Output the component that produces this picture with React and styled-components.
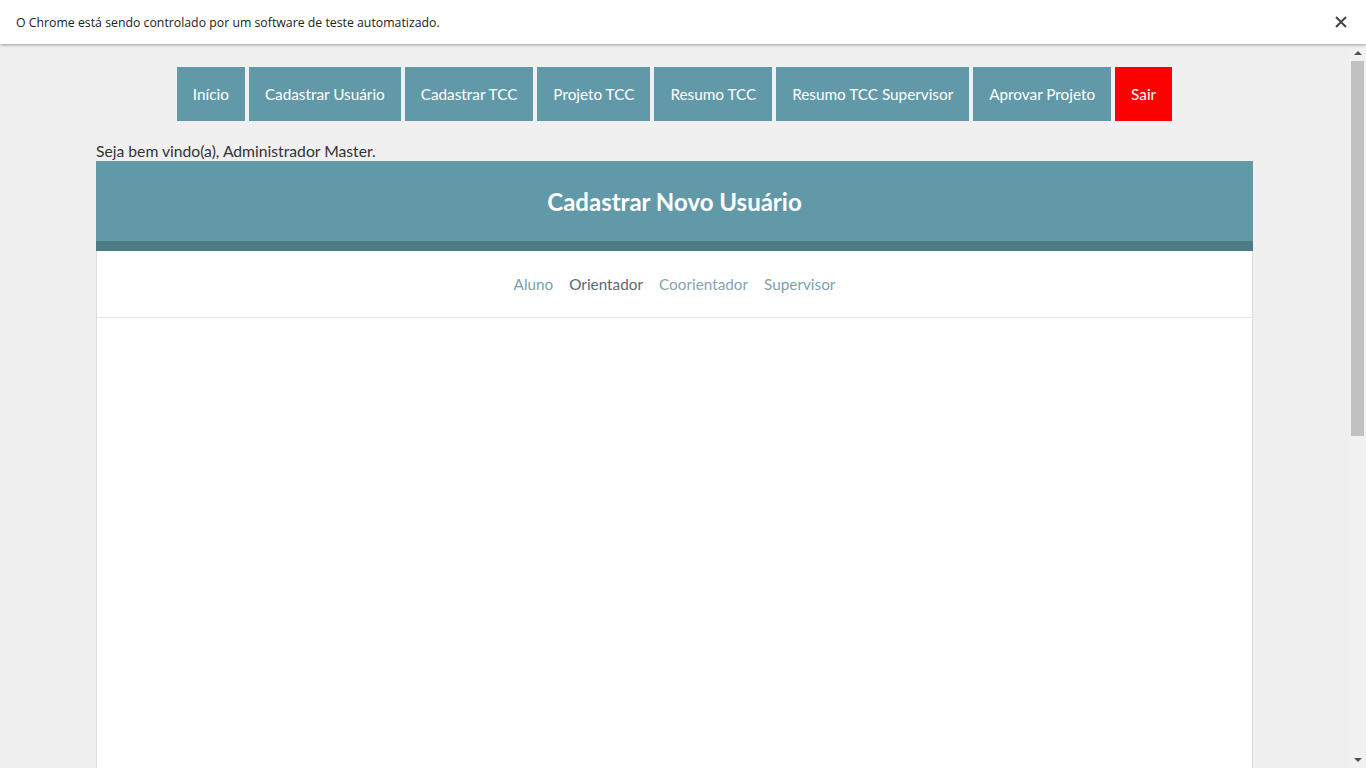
import React from "react";
import styled, { createGlobalStyle } from "styled-components";

const GlobalStyle = createGlobalStyle`
  html, body {
    margin: 0;
    padding: 0;
    height: 100%;
    overflow: hidden;
    background-color: #f0f0f0;
  }
  * {
    box-sizing: border-box;
  }
`;

const Screen = styled.div`
  height: 100vh;
  display: flex;
  flex-direction: column;
`;

const InfoBar = styled.div`
  position: relative;
  z-index: 2;
  height: 44px;
  flex-shrink: 0;
  background-color: #ffffff;
  box-shadow: 0 1px 3px rgba(0, 0, 0, 0.35);
  display: flex;
  align-items: center;
  justify-content: space-between;
  padding: 0 18px 0 16px;
  font-family: "Open Sans", "Noto Sans", sans-serif;
  font-size: 12.3px;
  color: #222;
`;

const CloseButton = styled.button`
  border: none;
  background: none;
  padding: 0;
  width: 14px;
  height: 14px;
  display: flex;
  cursor: pointer;
`;

const Viewport = styled.div`
  flex: 1;
  display: flex;
  min-height: 0;
`;

const Page = styled.div`
  flex: 1;
  overflow: hidden;
  display: flex;
  flex-direction: column;
  font-family: "Lato", "Open Sans", sans-serif;
`;

const Scrollbar = styled.div`
  width: 17px;
  flex-shrink: 0;
  background-color: #f1f1f1;
  display: flex;
  flex-direction: column;
  align-items: center;
`;

const Arrow = styled.div`
  height: 17px;
  width: 17px;
  display: flex;
  align-items: center;
  justify-content: center;
  &::after {
    content: "";
    border-left: 4px solid transparent;
    border-right: 4px solid transparent;
    ${(p) =>
      p.down
        ? "border-top: 4px solid #505050;"
        : "border-bottom: 4px solid #505050;"}
  }
`;

const Thumb = styled.div`
  width: 13px;
  height: 375px;
  background-color: #c1c1c1;
`;

const Track = styled.div`
  flex: 1;
`;

const Nav = styled.nav`
  display: flex;
  justify-content: center;
  gap: 4px;
  padding-top: 23px;
`;

const NavButton = styled.a`
  height: 54px;
  padding: 0 16px;
  display: flex;
  align-items: center;
  background-color: ${(p) => (p.danger ? "#ff0000" : "#6299a8")};
  color: #ffffff;
  font-size: 15.3px;
  text-decoration: none;
  cursor: pointer;
`;

const Container = styled.div`
  width: 1157px;
  margin: 20px auto 0;
  flex: 1;
  display: flex;
  flex-direction: column;
`;

const Welcome = styled.p`
  margin: 0;
  line-height: 20px;
  font-size: 15.7px;
  color: #333;
`;

const Card = styled.section`
  flex: 1;
  display: flex;
  flex-direction: column;
  background-color: #ffffff;
  border-left: 1px solid #dcdcdc;
  border-right: 1px solid #dcdcdc;
`;

const CardHeader = styled.header`
  height: 90px;
  margin: 0 -1px;
  background-color: #6299a8;
  border-bottom: 10px solid #4f7b85;
  display: flex;
  align-items: center;
  justify-content: center;
`;

const Title = styled.h1`
  margin: 0;
  color: #ffffff;
  font-size: 24px;
  font-weight: 700;
`;

const Tabs = styled.div`
  height: 67px;
  border-bottom: 1px solid #e6e6e6;
  display: flex;
  align-items: center;
  justify-content: center;
  gap: 16px;
`;

const Tab = styled.a`
  font-size: 15.3px;
  color: ${(p) => (p.active ? "#5a6a70" : p.muted ? "#88a4ac" : "#78a3ae")};
  text-decoration: none;
  cursor: pointer;
`;

const CardBody = styled.div`
  flex: 1;
`;

const menu = [
  "Início",
  "Cadastrar Usuário",
  "Cadastrar TCC",
  "Projeto TCC",
  "Resumo TCC",
  "Resumo TCC Supervisor",
  "Aprovar Projeto",
];

const App = () => {
  return (
    <Screen>
      <GlobalStyle />
      <InfoBar>
        <span>O Chrome está sendo controlado por um software de teste automatizado.</span>
        <CloseButton aria-label="Fechar">
          <svg width="14" height="14" viewBox="0 0 14 14">
            <path d="M2 2 L12 12 M12 2 L2 12" stroke="#444" strokeWidth="2" />
          </svg>
        </CloseButton>
      </InfoBar>
      <Viewport>
        <Page>
          <Nav>
            {menu.map((item) => (
              <NavButton key={item}>{item}</NavButton>
            ))}
            <NavButton danger>Sair</NavButton>
          </Nav>
          <Container>
            <Welcome>Seja bem vindo(a), Administrador Master.</Welcome>
            <Card>
              <CardHeader>
                <Title>Cadastrar Novo Usuário</Title>
              </CardHeader>
              <Tabs>
                <Tab>Aluno</Tab>
                <Tab active>Orientador</Tab>
                <Tab muted>Coorientador</Tab>
                <Tab>Supervisor</Tab>
              </Tabs>
              <CardBody />
            </Card>
          </Container>
        </Page>
        <Scrollbar>
          <Arrow />
          <Thumb />
          <Track />
          <Arrow down />
        </Scrollbar>
      </Viewport>
    </Screen>
  );
};

export default App;
